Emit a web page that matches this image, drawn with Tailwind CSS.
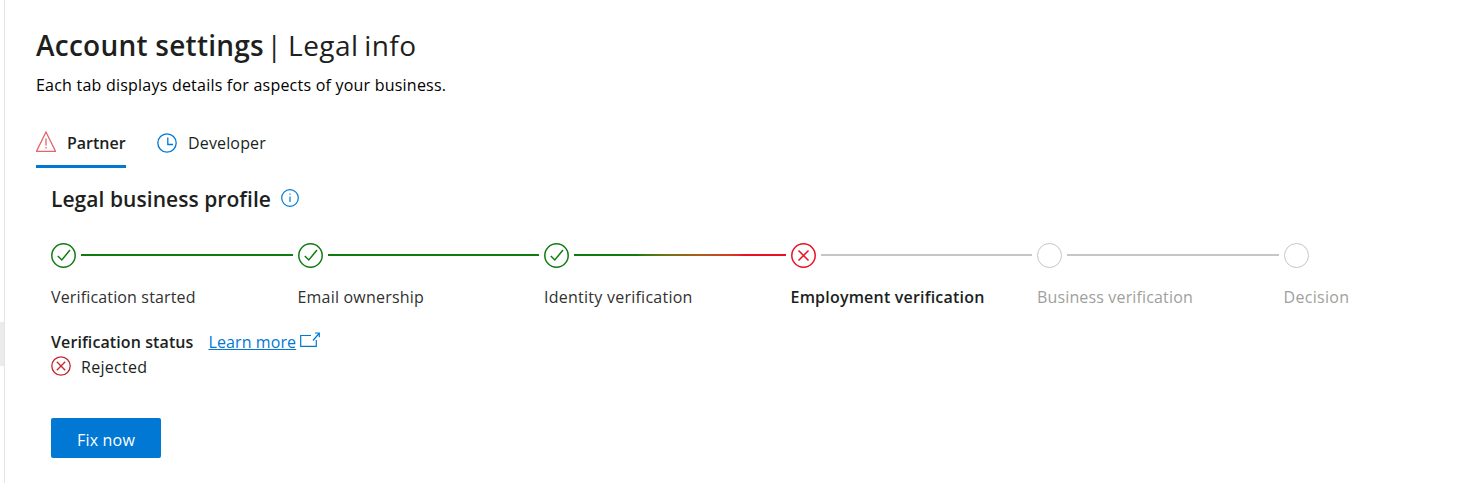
<!DOCTYPE html>
<html lang="en">
<head>
    <meta charset="UTF-8">
    <title>Account settings | Legal info</title>
    <script src="https://cdn.jsdelivr.net/npm/@tailwindcss/browser@4"></script>
</head>
<body class="bg-white h-[483px] overflow-hidden font-['Open_Sans',sans-serif] text-[#201f1e] relative">
    <div class="absolute left-0 top-[322px] w-[4px] h-[44px] bg-[#edebe9]"></div>
    <div class="ml-[4px] h-[483px] border-l border-[#e5e5e5] pl-[31px] pt-[26px]">
        <h1 class="text-[28px] leading-[38px] font-semibold tracking-[0.25px]">Account settings <span class="font-normal tracking-[0.45px] ml-[-5px] [word-spacing:-2px]">| Legal info</span></h1>
        <p class="mt-[10px] text-[16px] leading-[22px] tracking-[0.22px] text-black">Each tab displays details for aspects of your business.</p>

        <div class="mt-[31px] flex items-start gap-[31px] text-[16px] tracking-[0.15px]">
            <div class="w-[90px] h-[41px] border-b-[3px] border-[#0078d4] flex items-start">
                <svg class="mt-[4px] shrink-0" width="20" height="21" viewBox="0 0 20 21" fill="none" stroke="#e8636b" stroke-width="1.3"><path d="M10 1 19.6 20.4H.4Z"/><path d="M10 7.5v7M10 16v1.6"/></svg>
                <span class="ml-[11px] mt-[5px] leading-[22px] font-semibold tracking-[0px]">Partner</span>
            </div>
            <div class="flex items-start">
                <svg class="mt-[6px] shrink-0" width="20" height="20" viewBox="0 0 20 20" fill="none" stroke="#0078d4" stroke-width="1.3"><circle cx="10" cy="10" r="9.2"/><path d="M10.8 4.5V11.5H16"/></svg>
                <span class="ml-[11px] mt-[5px] leading-[22px]">Developer</span>
            </div>
        </div>

        <div class="pl-[15px]">
            <div class="mt-[17px] flex items-center h-[28px]">
                <h2 class="text-[21px] leading-[28px] font-semibold tracking-[0.05px]">Legal business profile</h2>
                <svg class="ml-[10px] mb-[3px]" width="18" height="18" viewBox="0 0 18 18" fill="none" stroke="#0078d4" stroke-width="1.2"><circle cx="9" cy="9" r="8.3"/><path d="M9 7.5v5.5M9 4.6v1.2"/></svg>
            </div>

            <div class="mt-[29px] flex w-[1480px]">
                <div class="w-[246.5px]">
                    <div class="flex items-center h-[26px]">
                        <svg class="shrink-0" width="25" height="25" viewBox="0 0 25 25" fill="none" stroke="#107c10" stroke-width="1.5"><circle cx="12.5" cy="12.5" r="11.7"/><path d="M6.8 13 10.8 17 19 7"/></svg>
                        <div class="ml-[5px] w-[212px] h-[2px] bg-[#107c10]"></div>
                    </div>
                    <div class="mt-[18px] text-[16px] leading-[22px] tracking-[0.15px] text-[#323130]">Verification started</div>
                </div>
                <div class="w-[246.5px]">
                    <div class="flex items-center h-[26px]">
                        <svg class="shrink-0" width="25" height="25" viewBox="0 0 25 25" fill="none" stroke="#107c10" stroke-width="1.5"><circle cx="12.5" cy="12.5" r="11.7"/><path d="M6.8 13 10.8 17 19 7"/></svg>
                        <div class="ml-[5px] w-[211px] h-[2px] bg-[#107c10]"></div>
                    </div>
                    <div class="mt-[18px] text-[16px] leading-[22px] tracking-[0.2px] text-[#323130]">Email ownership</div>
                </div>
                <div class="w-[246.5px]">
                    <div class="flex items-center h-[26px]">
                        <svg class="shrink-0" width="25" height="25" viewBox="0 0 25 25" fill="none" stroke="#107c10" stroke-width="1.5"><circle cx="12.5" cy="12.5" r="11.7"/><path d="M6.8 13 10.8 17 19 7"/></svg>
                        <div class="ml-[5px] w-[212px] h-[2px] bg-gradient-to-r from-[#107c10] from-30% to-[#e81123] to-80%"></div>
                    </div>
                    <div class="mt-[18px] text-[16px] leading-[22px] tracking-[0.25px] text-[#323130]">Identity verification</div>
                </div>
                <div class="w-[246.5px]">
                    <div class="flex items-center h-[26px]">
                        <svg class="shrink-0" width="25" height="25" viewBox="0 0 25 25" fill="none" stroke="#e81123" stroke-width="1.5"><circle cx="12.5" cy="12.5" r="11.7"/><path d="M7.5 7.5l10 10M17.5 7.5l-10 10"/></svg>
                        <div class="ml-[5px] w-[211px] h-[2px] bg-[#c8c6c4]"></div>
                    </div>
                    <div class="mt-[18px] text-[16px] leading-[22px] tracking-[0.2px] font-semibold">Employment verification</div>
                </div>
                <div class="w-[246.5px]">
                    <div class="flex items-center h-[26px]">
                        <div class="w-[25px] h-[25px] shrink-0 rounded-full border-[1.5px] border-[#c8c6c4]"></div>
                        <div class="ml-[5px] w-[212px] h-[2px] bg-[#c8c6c4]"></div>
                    </div>
                    <div class="mt-[18px] text-[16px] leading-[22px] tracking-[0.15px] text-[#a19f9d]">Business verification</div>
                </div>
                <div class="w-[150px]">
                    <div class="flex items-center h-[26px]">
                        <div class="w-[25px] h-[25px] shrink-0 rounded-full border-[1.5px] border-[#c8c6c4]"></div>
                    </div>
                    <div class="mt-[18px] text-[16px] leading-[22px] tracking-[0.3px] text-[#a19f9d]">Decision</div>
                </div>
            </div>

            <div class="mt-[23px] flex items-center h-[22px] text-[16px] tracking-[0.1px]">
                <span class="font-semibold">Verification status</span>
                <a href="#" class="ml-[15px] text-[#0078d4] underline">Learn more</a>
                <svg class="ml-[4px] mb-[5px]" width="20" height="16" viewBox="0 0 20 16" fill="none" stroke="#0078d4" stroke-width="1.2"><path d="M11 3.5H.7v10.8h15.6V8"/><path d="M13 8.5 19 1.5M15 1h4.3v4.3"/></svg>
            </div>
            <div class="mt-[3px] flex items-center h-[22px] text-[16px] tracking-[0.3px]">
                <svg class="shrink-0 mb-[2px]" width="20" height="20" viewBox="0 0 20 20" fill="none" stroke="#c4262e" stroke-width="1.3"><circle cx="10" cy="10" r="9.2"/><path d="M5.8 5.8l8.4 8.4M14.2 5.8l-8.4 8.4"/></svg>
                <span class="ml-[10px]">Rejected</span>
            </div>

            <button class="mt-[40px] w-[110px] h-[40px] pt-[3px] rounded-[2px] bg-[#0078d4] text-white text-[16px] tracking-[0.2px]">Fix now</button>
        </div>
    </div>
</body>
</html>
